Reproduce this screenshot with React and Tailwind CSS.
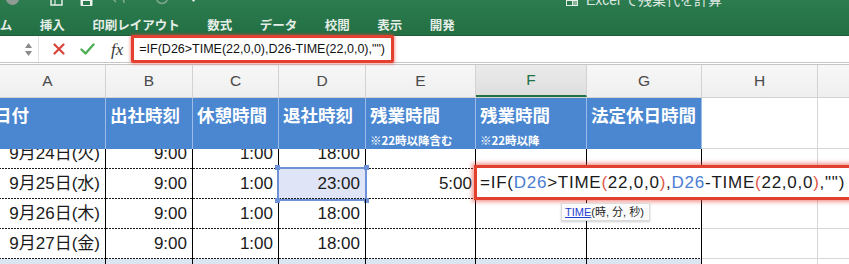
import React from 'react';

const cols = [
  { k: 'A', w: 'w-[116px]' },
  { k: 'B', w: 'w-[87px]' },
  { k: 'C', w: 'w-[86px]' },
  { k: 'D', w: 'w-[87px]' },
  { k: 'E', w: 'w-[110px]' },
  { k: 'F', w: 'w-[111px]' },
  { k: 'G', w: 'w-[115px]' },
  { k: 'H', w: 'w-[116px]' },
  { k: 'I', w: 'w-[140px]' },
];

const dash =
  'bg-[image:repeating-linear-gradient(90deg,#1a1a1a_0_2px,transparent_2px_3px)] bg-[length:100%_1px] bg-bottom bg-no-repeat';

const rows = [
  { d: '9月24日(火)', b: '9:00', c: '1:00', dd: '18:00', clip: true },
  { d: '9月25日(水)', b: '9:00', c: '1:00', dd: '23:00', e: '5:00', sel: true },
  { d: '9月26日(木)', b: '9:00', c: '1:00', dd: '18:00' },
  { d: '9月27日(金)', b: '9:00', c: '1:00', dd: '18:00' },
];

function DataRow({ r }) {
  const inner = r.clip ? 'mt-[-10px] h-[29px]' : 'h-full';
  const rowH = r.clip ? 'h-[20px]' : 'h-[30px]';
  const cell = (w, content, extra = '') => (
    <div className={`${w} h-full shrink-0 border-r border-black ${dash} overflow-hidden`}>
      <div className={`${inner} flex items-center justify-end ${extra || 'pr-[5px]'}`}>{content}</div>
    </div>
  );
  return (
    <div className={`flex ${rowH} text-[17px] text-[#1a1a1a]`}>
      {cell('w-[116px]', r.d)}
      {cell('w-[87px]', r.b)}
      {cell('w-[86px]', r.c)}
      <div className={`w-[87px] h-full shrink-0 border-r border-black ${dash} relative ${r.sel ? 'bg-[#dfe4f6]' : ''}`}>
        <div className={`${r.clip ? 'overflow-hidden h-full' : 'h-full'}`}>
          <div className={`${inner} flex items-center justify-end pr-[5px]`}>{r.dd}</div>
        </div>
        {r.sel && (
          <div className="absolute left-[-2px] top-[-2px] w-[90px] h-[34px] border-2 border-[#6d92d8]">
            <div className="absolute left-[-4px] top-[-4px] w-[5px] h-[5px] bg-[#6d92d8]" />
            <div className="absolute right-[-4px] top-[-4px] w-[5px] h-[5px] bg-[#6d92d8]" />
            <div className="absolute left-[-4px] bottom-[-4px] w-[5px] h-[5px] bg-[#6d92d8]" />
            <div className="absolute right-[-4px] bottom-[-4px] w-[5px] h-[5px] bg-[#6d92d8]" />
          </div>
        )}
      </div>
      {cell('w-[110px]', r.e || '', 'pr-[3px]')}
      <div className={`w-[111px] h-full shrink-0 border-r border-black ${dash} relative`}>
        {r.sel && (
          <>
            <div className="absolute left-[-2px] top-[-4px] w-[390px] h-[35px] z-10 bg-white border-[3px] border-[#e2402f] shadow-[0_0_4px_2px_rgba(235,70,60,0.55)] flex items-center pl-[3px] text-[17px] tracking-[0.75px] whitespace-nowrap text-[#1a1a1a]">
              <span>=IF(</span>
              <span className="text-[#4a7dd3]">D26</span>
              <span>&gt;TIME</span>
              <span className="text-[#e0584c]">(</span>
              <span>22,0,0</span>
              <span className="text-[#e0584c]">)</span>
              <span>,</span>
              <span className="text-[#4a7dd3]">D26</span>
              <span>-TIME</span>
              <span className="text-[#e0584c]">(</span>
              <span>22,0,0</span>
              <span className="text-[#e0584c]">)</span>
              <span>,"")</span>
            </div>
            <div className="absolute left-[85px] top-[34px] z-10 w-[89px] h-[18px] bg-[#fbfbfb] border border-[#dcdcdc] shadow-[0_1px_2px_rgba(0,0,0,0.2)] flex items-center pl-[3px] text-[11px] tracking-normal text-[#222] whitespace-nowrap">
              <span className="text-[#1f3fd0] underline">TIME</span>
              <span>(時, 分, 秒)</span>
            </div>
          </>
        )}
      </div>
      <div className={`w-[115px] h-full shrink-0 border-r border-black ${dash}`} />
      <div className="w-[116px] h-full shrink-0 border-r border-b border-[#d6d6d6]" />
      <div className="w-[140px] h-full shrink-0 border-b border-[#d6d6d6]" />
    </div>
  );
}

export default function App() {
  return (
    <div className="w-[849px] h-[264px] overflow-hidden bg-white font-['Liberation_Sans','Noto_Sans_CJK_JP',sans-serif]">
      {/* Ribbon */}
      <div className="h-[36px] bg-linear-to-b from-[#2c7c4f] to-[#226f44] border-b border-[#1d5e39] overflow-hidden">
        <div className="h-[14px] flex items-start relative">
          <div className="ml-[6px] mt-[-8px] w-[13px] h-[13px] rounded-full bg-[#8f9c93]" />
          <svg className="ml-[31px] mt-[-6px]" width="13" height="12" viewBox="0 0 13 12">
            <rect x="1" y="1" width="11" height="10" fill="none" stroke="#e8efe9" strokeWidth="1.5" />
            <line x1="5" y1="1" x2="5" y2="11" stroke="#e8efe9" strokeWidth="1.2" />
          </svg>
          <svg className="ml-[17px] mt-[-6px]" width="13" height="12" viewBox="0 0 13 12">
            <rect x="0.5" y="0" width="12" height="12" rx="1" fill="#eef3ef" />
            <rect x="3" y="7" width="7" height="4" fill="#2a7a4d" />
          </svg>
          <svg className="ml-[18px] mt-[-6px]" width="16" height="12" viewBox="0 0 16 12">
            <path d="M2 4 L8 4 Q13 4 13 9" fill="none" stroke="#7fa88f" strokeWidth="1.5" />
            <path d="M1 4 L5 0 M1 4 L5 8" stroke="#7fa88f" strokeWidth="1.5" />
          </svg>
          <svg className="ml-[28px] mt-[-6px]" width="14" height="12" viewBox="0 0 14 12">
            <circle cx="7" cy="4" r="5.5" fill="none" stroke="#7fa88f" strokeWidth="1.5" />
          </svg>
          <svg className="ml-[20px] mt-[-3px]" width="9" height="6" viewBox="0 0 9 6">
            <path d="M0 0 L9 0 L4.5 5 Z" fill="#dfe8e2" />
          </svg>
          <div className="absolute left-[566px] top-[-7px] flex items-end gap-[8px] text-[14px] text-[#dde8e0]">
            <svg className="mb-[1px]" width="12" height="13" viewBox="0 0 12 13">
              <rect x="0" y="0" width="12" height="13" fill="#e6eee8" />
              <rect x="1" y="8" width="5" height="4" fill="#2a7a4d" />
              <line x1="7" y1="9" x2="11" y2="9" stroke="#2a7a4d" />
              <line x1="7" y1="11" x2="11" y2="11" stroke="#2a7a4d" />
            </svg>
            <span className="leading-[14px]">Excel で残業代を計算</span>
          </div>
        </div>
        <div className="h-[22px] flex items-center gap-[27.5px] ml-[-25px] text-[12.5px] font-bold text-[#e4ede6] font-['Noto_Sans_CJK_JP',sans-serif] whitespace-nowrap">
          <span>ホーム</span>
          <span>挿入</span>
          <span>印刷レイアウト</span>
          <span>数式</span>
          <span>データ</span>
          <span>校閲</span>
          <span>表示</span>
          <span>開発</span>
        </div>
      </div>

      {/* Formula bar */}
      <div className="h-[26px] flex items-stretch bg-white">
        <div className="w-[39px] shrink-0 border-r border-[#e2e2e2] flex flex-col items-end justify-center gap-[3px] pr-[6px]">
          <svg width="7" height="5" viewBox="0 0 7 5"><path d="M0 5 L3.5 0 L7 5 Z" fill="#8a8a8a" /></svg>
          <svg width="7" height="5" viewBox="0 0 7 5"><path d="M0 0 L3.5 5 L7 0 Z" fill="#8a8a8a" /></svg>
        </div>
        <div className="flex items-center pl-[14px]">
          <svg width="12" height="12" viewBox="0 0 12 12">
            <path d="M1.5 1.5 L10.5 10.5 M10.5 1.5 L1.5 10.5" stroke="#d8433a" strokeWidth="2.2" strokeLinecap="round" />
          </svg>
          <svg className="ml-[15px]" width="15" height="12" viewBox="0 0 15 12">
            <path d="M1.5 6.5 L5.5 10.5 L13.5 1.5" fill="none" stroke="#4fae55" strokeWidth="2.4" strokeLinecap="round" strokeLinejoin="round" />
          </svg>
          <span className="ml-[16px] text-[17px] italic font-['Liberation_Serif',serif] text-[#3a3a3a] leading-none">fx</span>
        </div>
        <div className="ml-[8px] mt-[-1px] h-[28px] w-[263px] border-[3px] border-[#e3402f] rounded-[2px] shadow-[0_0_3px_1px_rgba(235,70,60,0.5)] flex items-center pl-[5px] text-[12.5px] text-[#111] whitespace-nowrap">
          =IF(D26&gt;TIME(22,0,0),D26-TIME(22,0,0),"")
        </div>
      </div>
      <div className="h-[3px] border-t border-b border-[#c6c6c6]" />

      {/* Column headers */}
      <div className="flex h-[33px] ml-[-10px] bg-linear-to-b from-[#f7f7f7] to-[#efefef] border-b border-[#d2d2d2] text-[15.5px] text-[#4a4a4a]">
        {cols.map((c) => (
          <div
            key={c.k}
            className={`${c.w} shrink-0 h-full flex items-center justify-center border-r border-[#d2d2d2] ${
              c.k === 'F' ? 'bg-linear-to-b from-[#ebebeb] to-[#dedede] border-b-2 border-b-[#217346] text-[#217346]' : ''
            }`}
          >
            {c.k}
          </div>
        ))}
      </div>

      {/* Blue header row */}
      <div className="flex h-[51px] ml-[-10px] text-white font-bold font-['Noto_Sans_CJK_JP',sans-serif]">
        {[
          { t: '日付', w: 'w-[116px]' },
          { t: '出社時刻', w: 'w-[87px]' },
          { t: '休憩時間', w: 'w-[86px]' },
          { t: '退社時刻', w: 'w-[87px]' },
          { t: '残業時間', s: '※22時以降含む', w: 'w-[110px]' },
          { t: '残業時間', s: '※22時以降', w: 'w-[111px]' },
          { t: '法定休日時間', w: 'w-[115px]' },
        ].map((h, i) => (
          <div key={i} className={`${h.w} shrink-0 h-full bg-[#4b87d1] border-r border-[#9cbbe6] flex flex-col pl-[4px] pt-[5px]`}>
            <span className="text-[17.5px] leading-[24px] whitespace-nowrap">{h.t}</span>
            {h.s && <span className="text-[11.5px] leading-[14px] mt-[6px] whitespace-nowrap">{h.s}</span>}
          </div>
        ))}
        <div className="w-[116px] shrink-0 h-full border-r border-b border-[#d6d6d6]" />
        <div className="w-[140px] shrink-0 h-full border-b border-[#d6d6d6]" />
      </div>

      {/* Data rows */}
      <div className="ml-[-10px]">
        {rows.map((r, i) => (
          <DataRow key={i} r={r} />
        ))}
        <div className="flex h-[10px]">
          {['w-[116px]', 'w-[87px]', 'w-[86px]', 'w-[87px]', 'w-[110px]', 'w-[111px]', 'w-[115px]'].map((w, i) => (
            <div key={i} className={`${w} shrink-0 h-full bg-[#dce6f2] border-r border-black`} />
          ))}
          <div className="w-[116px] shrink-0 h-full border-r border-[#d6d6d6]" />
        </div>
      </div>
    </div>
  );
}
